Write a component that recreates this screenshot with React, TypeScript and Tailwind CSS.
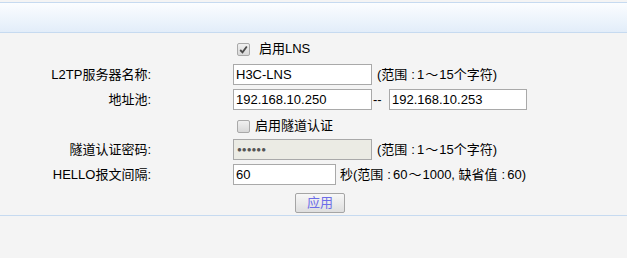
import React from "react";

const font = { fontFamily: '"Liberation Sans", Arial, "Noto Sans CJK SC", sans-serif' };

function Label({ children }: { children?: React.ReactNode }) {
  return <div className="w-[152px] shrink-0 text-right pr-[1px]">{children}</div>;
}

function Colon() {
  return <span className="ml-[4px] mr-[2px]">:</span>;
}

function Check({ checked }: { checked?: boolean }) {
  return (
    <span className="inline-flex w-[13px] h-[13px] items-center justify-center rounded-[2px] border border-[#a9a9a9] bg-gradient-to-b from-[#f0f0f0] to-[#d8d8d8]">
      {checked && (
        <svg width="9" height="9" viewBox="0 0 9 9">
          <path d="M1.2 5 L3.5 7.3 L7.8 1.5" stroke="#4a4a4a" strokeWidth="1.8" fill="none" />
        </svg>
      )}
    </span>
  );
}

export default function App() {
  return (
    <div className="w-[627px] h-[258px] bg-[#f4f4f4] text-[13px] text-black overflow-hidden" style={font}>
      <div className="h-[2px]" />
      <div className="h-[31px] border-y border-[#c6daf0] bg-gradient-to-b from-[#fbfdff] to-[#e2edf9]" />
      <div className="flex flex-col pt-[8px]">
        <div className="flex items-center h-[16px]">
          <div className="ml-[237px] flex items-center gap-[9px]">
            <Check checked />
            <span>启用LNS</span>
          </div>
        </div>
        <div className="flex items-center h-[21px] mt-[7px]">
          <Label>L2TP服务器名称:</Label>
          <div className="ml-[81px] flex items-center">
            <div className="w-[139px] h-[21px] border border-[#a9a9a9] bg-white pl-[2px] leading-[19px]">H3C-LNS</div>
            <span className="ml-[5px]">(范围<Colon />1<span className="mx-[1px]">～</span>15个字符)</span>
          </div>
        </div>
        <div className="flex items-center h-[21px] mt-[4px]">
          <Label>地址池:</Label>
          <div className="ml-[81px] flex items-center">
            <div className="w-[139px] h-[21px] border border-[#a9a9a9] bg-white pl-[2px] leading-[19px]">192.168.10.250</div>
            <span className="w-[17px] pl-[1px]">--</span>
            <div className="w-[138px] h-[21px] border border-[#a9a9a9] bg-white pl-[2px] leading-[19px]">192.168.10.253</div>
          </div>
        </div>
        <div className="flex items-center h-[16px] mt-[8px]">
          <div className="ml-[237px] flex items-center gap-[5px]">
            <Check />
            <span>启用隧道认证</span>
          </div>
        </div>
        <div className="flex items-center h-[21px] mt-[5px]">
          <Label>隧道认证密码:</Label>
          <div className="ml-[81px] flex items-center">
            <div className="w-[139px] h-[21px] border border-[#a9a9a9] bg-[#ebebe4] pl-[3px] leading-[19px] text-[#555] text-[8px]">●●●●●●</div>
            <span className="ml-[5px]">(范围<Colon />1<span className="mx-[1px]">～</span>15个字符)</span>
          </div>
        </div>
        <div className="flex items-center h-[21px] mt-[4px]">
          <Label>HELLO报文间隔:</Label>
          <div className="ml-[81px] flex items-center">
            <div className="w-[103px] h-[21px] border border-[#a9a9a9] bg-white pl-[2px] leading-[19px]">60</div>
            <span className="ml-[4px]">秒(范围<Colon />60<span className="mx-[1px]">～</span>1000, 缺省值<Colon />60)</span>
          </div>
        </div>
        <div className="flex h-[20px] mt-[8px]">
          <button className="ml-[295px] w-[50px] h-[20px] border border-[#a5a5a5] rounded-[2px] bg-gradient-to-b from-[#f7f7f7] to-[#dedede] text-[#6d6de8] leading-[18px] text-[13px]">
            应用
          </button>
        </div>
        <div className="h-[1px] bg-[#c6daf0] mt-[2px]" />
      </div>
    </div>
  );
}
